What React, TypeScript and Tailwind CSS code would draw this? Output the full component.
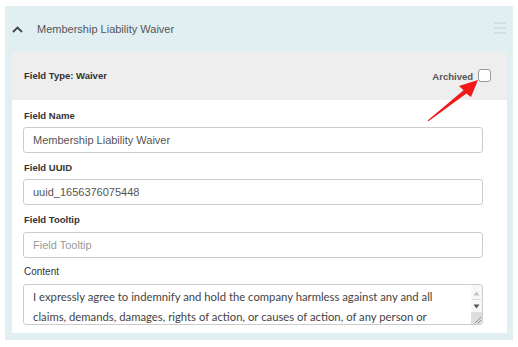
import React from "react"

// Single collapsible "waiver" field editor, as shown in a form builder
const label = "block h-[14px] text-[9.5px] font-bold leading-[14px] text-[#333]"
const input =
  "block h-[26px] w-full rounded-[3px] border border-[#cccccc] bg-white px-[9px] text-[11px] text-[#555] outline-none placeholder:text-[#999]"

export default function App() {
  return (
    <div className="relative h-[347px] w-[518px] overflow-hidden bg-white pt-[6px] pl-[5px]" style={{ fontFamily: '"Liberation Sans", Arial, sans-serif' }}>
      <div className="w-[508px] bg-[#e1eff3] pb-[7px]">
        {/* Accordion header */}
        <div className="flex h-[46px] items-center pl-[7px] pr-[7px]">
          <svg width="11" height="7" viewBox="0 0 11 7" className="mr-[14px]">
            <path d="M1 6 L5.5 1.5 L10 6" fill="none" stroke="#444" strokeWidth="1.8" />
          </svg>
          <span className="text-[11px] text-[#555]">Membership Liability Waiver</span>
          <svg width="12" height="12" viewBox="0 0 12 12" className="ml-auto -mt-[2px]">
            <rect x="0" y="0.5" width="12" height="1.3" fill="#cdd7da" />
            <rect x="0" y="5.3" width="12" height="1.3" fill="#cdd7da" />
            <rect x="0" y="10.2" width="12" height="1.3" fill="#cdd7da" />
          </svg>
        </div>

        {/* Card */}
        <div className="ml-[7px] w-[495px] overflow-hidden rounded-[2px] bg-white">
          <div className="flex h-[48px] items-center justify-between bg-[#eeeeee] pl-[12px] pr-[16px]">
            <span className="text-[9.5px] font-bold text-[#333]">Field Type: Waiver</span>
            <div className="flex items-center gap-[5px] pt-[2px]">
              <span className="text-[9.5px] font-bold text-[#555]">Archived</span>
              <span className="block h-[13px] w-[13px] -translate-y-[2px] rounded-[3px] border border-[#999] bg-white" />
            </div>
          </div>

          <div className="pt-[9px] pr-[24px] pb-[8px] pl-[11px]">
            <label className={label + " ml-[1px]"}>Field Name</label>
            <input className={input + " mt-[4px]"} defaultValue="Membership Liability Waiver" />

            <label className={label + " mt-[8px] ml-[1px]"}>Field UUID</label>
            <input className={input + " mt-[4px]"} defaultValue="uuid_1656376075448" />

            <label className={label + " mt-[8px] ml-[1px]"}>Field Tooltip</label>
            <input className={input + " mt-[5px]"} placeholder="Field Tooltip" />

            <label className="mt-[7px] ml-[1px] block h-[14px] text-[10px] leading-[14px] text-[#333]">Content</label>
            <div className="mt-[5px] flex h-[41px] overflow-hidden rounded-[3px] border border-[#cccccc] bg-white">
              <div
                className="flex-1 overflow-hidden pt-[2px] pl-[9px] text-[11.3px] leading-[20px] text-[#444]"
                style={{ fontFamily: 'Lato, "Open Sans", sans-serif' }}
              >
                <p>I expressly agree to indemnify and hold the company harmless against any and all</p>
                <p>claims, demands, damages, rights of action, or causes of action, of any person or</p>
                <p>entity, that may arise from injuries or damages sustained by any person or property</p>
              </div>
              {/* textarea scrollbar + resizer */}
              <div className="flex w-[11px] flex-col items-center bg-[#f7f7f7]">
                <svg width="7" height="5" viewBox="0 0 7 5" className="mt-[6px]">
                  <path d="M0.5 4.5 L3.5 0.5 L6.5 4.5 Z" fill="#c4c4c4" />
                </svg>
                <div className="mt-[3px] h-[1px] w-[9px] bg-[#dcdcdc]" />
                <svg width="7" height="5" viewBox="0 0 7 5" className="mt-[4px]">
                  <path d="M0.5 0.5 L6.5 0.5 L3.5 4.5 Z" fill="#555" />
                </svg>
                <div className="mt-auto flex h-[12px] w-full items-end justify-end bg-[#dedede]">
                  <svg width="9" height="9" viewBox="0 0 9 9">
                    <path d="M8 2 L2 8 M8 5 L5 8" stroke="#888" strokeWidth="0.9" />
                  </svg>
                </div>
              </div>
            </div>
          </div>
        </div>
      </div>

      {/* red callout arrow pointing at the Archived checkbox */}
      <svg className="pointer-events-none absolute top-0 left-0" width="518" height="347" viewBox="0 0 518 347">
        <polygon
          points="427.6,120.6 463.6,90.2 459,86 478,80 471,97 466.4,93.4 428.4,121.2"
          fill="#f01818"
        />
      </svg>
    </div>
  )
}
